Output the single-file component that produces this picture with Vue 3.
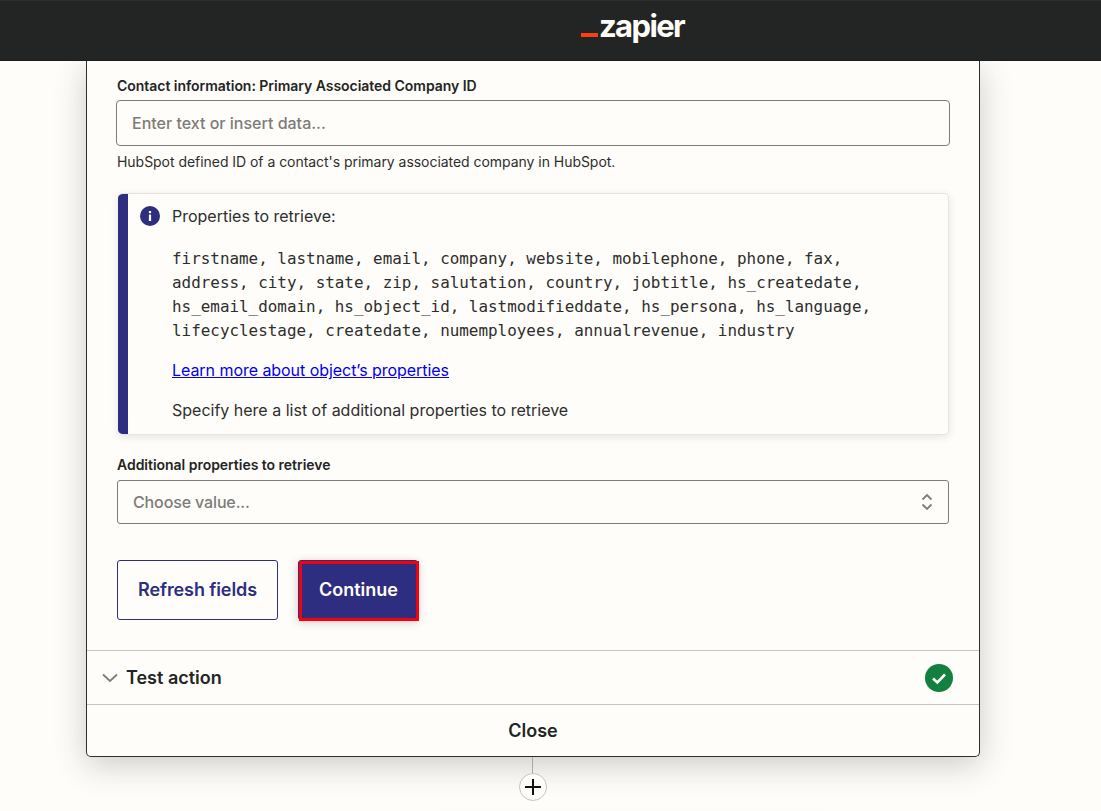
<template>
  <div class="page">
    <header class="topbar">
      <div class="logo"><span class="logo-dash"></span><span class="logo-word">zapier</span></div>
    </header>
    <main class="canvas">
      <section class="card">
        <div class="form">
          <label class="field-label">Contact information: Primary Associated Company ID</label>
          <div class="text-input">Enter text or insert data...</div>
          <p class="help">HubSpot defined ID of a contact's primary associated company in HubSpot.</p>

          <div class="alert">
            <div class="alert-bar"></div>
            <div class="alert-body">
              <div class="alert-title">
                <svg class="info-icon" width="20" height="20" viewBox="0 0 20 20">
                  <circle cx="10" cy="10" r="10" fill="#2d2e7f" />
                  <rect x="8.900" y="8.600" width="2.200" height="6.400" fill="#fffdf9" />
                  <rect x="8.900" y="5" width="2.200" height="2.200" fill="#fffdf9" />
                </svg>
                <span>Properties to retrieve:</span>
              </div>
              <div class="props">
                <div v-for="line in propLines" :key="line">{{ line }}</div>
              </div>
              <a class="learn" href="#">Learn more about object’s properties</a>
              <p class="specify">Specify here a list of additional properties to retrieve</p>
            </div>
          </div>

          <label class="field-label second">Additional properties to retrieve</label>
          <div class="select-input">
            <span>Choose value...</span>
            <svg width="12" height="18" viewBox="0 0 12 18" fill="none" stroke="#7d7c78" stroke-width="1.800">
              <path d="M1.500 6.500 6 2l4.500 4.500" />
              <path d="M1.500 11.500 6 16l4.500-4.500" />
            </svg>
          </div>

          <div class="buttons">
            <button class="btn btn-outline">Refresh fields</button>
            <button class="btn btn-primary">Continue</button>
          </div>
        </div>

        <div class="test-row">
          <svg class="chevron" width="16" height="10" viewBox="0 0 16 10" fill="none" stroke="#7d7c78" stroke-width="1.800">
            <path d="M1 1.500 8 8l7-6.500" />
          </svg>
          <span class="test-label">Test action</span>
          <svg class="check" width="28" height="28" viewBox="0 0 28 28">
            <circle cx="14" cy="14" r="14" fill="#13803f" />
            <path d="M8 14.500 12.300 18.500 20 10.500" fill="none" stroke="#fffdf9" stroke-width="2.600" />
          </svg>
        </div>
        <div class="close-row">Close</div>
      </section>
      <div class="connector"></div>
      <div class="add-step">
        <svg width="16" height="16" viewBox="0 0 16 16" stroke="#111" stroke-width="2">
          <path d="M8 0v16M0 8h16" />
        </svg>
      </div>
      <div class="next-card"></div>
    </main>
  </div>
</template>

<script setup>
const propLines = [
  'firstname, lastname, email, company, website, mobilephone, phone, fax,',
  'address, city, state, zip, salutation, country, jobtitle, hs_createdate,',
  'hs_email_domain, hs_object_id, lastmodifieddate, hs_persona, hs_language,',
  'lifecyclestage, createdate, numemployees, annualrevenue, industry'
];
</script>

<style>
html,
body {
  margin: 0;
  height: 100%;
  overflow: hidden;
  background: #fffdf9;
}
</style>

<style scoped>
.page {
  width: 1101px;
  height: 811px;
  display: flex;
  flex-direction: column;
  overflow: hidden;
  font-family: Inter, "Liberation Sans", sans-serif;
  color: #2d2e2e;
  background: #fffdf9;
}

/* Header */
.topbar {
  position: relative;
  z-index: 2;
  flex: 0 0 61px;
  box-sizing: border-box;
  display: flex;
  justify-content: center;
  padding: 5px 0 0 164px;
  background: #232524;
  border-top: 1px solid #2d2f2e;
  border-bottom: 1px solid #1c1d1d;
}

.logo {
  display: flex;
  align-items: flex-start;
  height: 40px;
}

.logo-dash {
  width: 17px;
  height: 4px;
  margin: 27px 1px 0 0;
  background: #ff3e0f;
}

.logo-word {
  font-size: 31px;
  line-height: 40px;
  font-weight: 700;
  letter-spacing: -1.6px;
  color: #fffdf9;
}

/* Card */
.canvas {
  flex: 1;
  display: flex;
  flex-direction: column;
  align-items: flex-start;
  padding-left: 86px;
}

.card {
  width: 892px;
  height: 695px;
  flex: none;
  display: flex;
  flex-direction: column;
  background: #fffdf9;
  border: 1px solid #2d2e2e;
  border-top: 0;
  border-radius: 0 0 5px 5px;
  box-shadow: 0 8px 32px rgba(45, 46, 46, 0.24);
}

.form {
  flex: 1;
  padding: 16px 29px 0 30px;
}

.field-label {
  display: block;
  font-size: 14px;
  line-height: 18px;
  font-weight: 600;
  letter-spacing: -0.03px;
  color: #232524;
}

.field-label.second {
  margin-top: 21px;
}

.text-input {
  box-sizing: border-box;
  height: 46px;
  margin: 5px 0 0 -1px;
  padding: 0 15px;
  border: 1px solid #7d7c78;
  border-radius: 4px;
  font-size: 16px;
  font-weight: 500;
  line-height: 44px;
  color: #7d7c78;
}

.help {
  margin: 6px 0 0;
  font-size: 14px;
  line-height: 20px;
  letter-spacing: -0.04px;
  color: #2d2e2e;
}

/* Info box */
.alert {
  display: flex;
  height: 242px;
  margin: 21px 1px 0;
  box-sizing: border-box;
  border: 1px solid #e6e4df;
  border-left: 0;
  border-radius: 5px;
  overflow: hidden;
  box-shadow: 0 2px 8px rgba(45, 46, 46, 0.12);
}

.alert-bar {
  flex: 0 0 10px;
  background: #2d2e7f;
}

.alert-body {
  flex: 1;
  padding: 12px 0 0 12px;
}

.alert-title {
  display: flex;
  align-items: center;
  gap: 12px;
  font-size: 16px;
  line-height: 20px;
}

.props {
  margin: 21px 0 0 32px;
  font-family: "DejaVu Sans Mono", "Liberation Mono", monospace;
  font-size: 15.920px;
  line-height: 24px;
  white-space: pre;
}

.learn {
  display: block;
  margin: 15px 0 0 32px;
  font-size: 16px;
  line-height: 24px;
  letter-spacing: -0.05px;
  color: #0000ee;
  text-decoration: underline;
}

.specify {
  margin: 16px 0 0 32px;
  font-size: 16px;
  line-height: 24px;
}

/* Select */
.select-input {
  box-sizing: border-box;
  height: 44px;
  margin: 6px 1px 0 0;
  padding: 0 15px;
  display: flex;
  align-items: center;
  justify-content: space-between;
  border: 1px solid #7d7c78;
  border-radius: 3px;
  font-size: 16px;
  font-weight: 500;
  letter-spacing: -0.13px;
  color: #7d7c78;
}

/* Buttons */
.buttons {
  display: flex;
  gap: 20px;
  margin-top: 36px;
}

.btn {
  box-sizing: border-box;
  height: 60px;
  padding: 0 0 1px;
  font-family: inherit;
  font-size: 18px;
  font-weight: 600;
  border-radius: 3px;
}

.btn-outline {
  width: 161px;
  background: #fffdf9;
  border: 1px solid #2d2e7f;
  letter-spacing: -0.1px;
  color: #2d2e7f;
}

.btn-primary {
  position: relative;
  width: 120px;
  padding-left: 1px;
  background: #2d2e7f;
  border: 1px solid #2d2e7f;
  color: #fffdf9;
  box-shadow: 0 2px 8px rgba(45, 46, 46, 0.25);
}

/* red highlight drawn over the button, offset by a pixel */
.btn-primary::after {
  content: "";
  position: absolute;
  top: 0;
  left: 0;
  right: -2px;
  bottom: -2px;
  border: 3px solid #f5000f;
}

/* Rows */
.test-row {
  height: 55px;
  flex: none;
  box-sizing: border-box;
  display: flex;
  align-items: center;
  padding: 0 26px 0 15px;
  border-top: 1px solid #c5c4c0;
  border-bottom: 1px solid #c5c4c0;
}

.test-label {
  flex: 1;
  margin-left: 8px;
  font-size: 18px;
  font-weight: 600;
  color: #232524;
}

.close-row {
  height: 51px;
  flex: none;
  display: flex;
  align-items: center;
  justify-content: center;
  padding-bottom: 1px;
  box-sizing: border-box;
  font-size: 18px;
  font-weight: 600;
  color: #232524;
}

/* Add step */
.connector {
  width: 1px;
  height: 16px;
  margin-left: 446px;
  background: #a9a8a4;
}

.add-step {
  box-sizing: border-box;
  width: 28px;
  height: 28px;
  flex: none;
  margin-left: 433px;
  display: flex;
  align-items: center;
  justify-content: center;
  border: 1px solid #c5c4c0;
  border-radius: 50%;
  background: #fffdf9;
}

.next-card {
  width: 390px;
  height: 60px;
  flex: none;
  margin: 24px 0 0 352px;
  box-shadow: 0 4px 24px rgba(45, 46, 46, 0.1);
}
</style>
